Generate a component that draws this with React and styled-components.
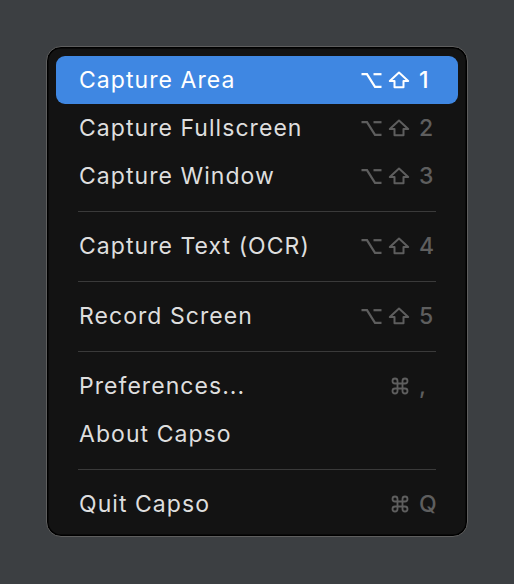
import React from 'react';
import styled, { createGlobalStyle } from 'styled-components';
import { Command } from 'lucide-react';

const GlobalStyle = createGlobalStyle`
    html, body {
        margin: 0;
        padding: 0;
        background: #3c3f42;
    }
    body {
        font-family: Inter, "Noto Sans", sans-serif;
        -webkit-font-smoothing: antialiased;
    }
`

const Page = styled.div`
    width: 514px;
    height: 584px;
    box-sizing: border-box;
    padding: 46px 46px 47px;
    display: flex;
    align-items: flex-start;
`

const Menu = styled.div`
    width: 422px;
    box-sizing: border-box;
    padding: 9px 9px 8px;
    background: #131313;
    border: 1px solid #5e5e5e;
    border-radius: 15px;
    box-shadow: inset 0 0 0 1.5px #000;
    display: flex;
    flex-direction: column;
`

const Row = styled.div`
    height: 48px;
    display: flex;
    align-items: center;
    justify-content: space-between;
    padding: 0 21px 0 23px;
    border-radius: 9px;
    background: ${p => (p.active ? '#3f87e2' : 'transparent')};
    color: ${p => (p.active ? '#ffffff' : '#dedede')};
`

const Label = styled.span`
    font-size: 23px;
    font-weight: 400;
    letter-spacing: 1.05px;
`

const Shortcut = styled.span`
    display: flex;
    align-items: center;
    color: ${p => (p.active ? '#ffffff' : '#5e5e5e')};
`

const Mods = styled.span`
    display: flex;
    align-items: center;
    gap: 6px;
`

const Key = styled.span`
    width: 18px;
    margin-left: 9px;
    font-size: 23px;
    font-weight: 500;
    text-align: left;
`

const Separator = styled.div`
    height: 1px;
    margin: 11px 22px 10px;
    background: #3a3a3a;
`

function OptionIcon() {
    return (
        <svg width="21" height="17" viewBox="0 0 21 17" fill="none" stroke="currentColor" strokeWidth="2.2" strokeLinejoin="miter">
            <path d="M0.5 2.2 H6 L14 14.8 H20.5" />
            <path d="M12.5 2.2 H20.5" />
        </svg>
    )
}

function ShiftIcon() {
    return (
        <svg width="22" height="18" viewBox="0 0 22 18" fill="none" stroke="currentColor" strokeWidth="2" strokeLinejoin="round">
            <path d="M11 1.5 L1.8 10 H6.5 V16.3 H15.5 V10 H20.2 Z" />
        </svg>
    )
}

function Shortcut_({ mods, k, active }) {
    return (
        <Shortcut active={active}>
            <Mods>
                {mods.includes('opt') && <OptionIcon />}
                {mods.includes('shift') && <ShiftIcon />}
                {mods.includes('cmd') && <Command size={20} strokeWidth={2.2} />}
            </Mods>
            <Key>{k}</Key>
        </Shortcut>
    )
}

const groups = [
    [
        { label: 'Capture Area', mods: ['opt', 'shift'], k: '1', active: true },
        { label: 'Capture Fullscreen', mods: ['opt', 'shift'], k: '2' },
        { label: 'Capture Window', mods: ['opt', 'shift'], k: '3' },
    ],
    [
        { label: 'Capture Text (OCR)', mods: ['opt', 'shift'], k: '4' },
    ],
    [
        { label: 'Record Screen', mods: ['opt', 'shift'], k: '5' },
    ],
    [
        { label: 'Preferences...', mods: ['cmd'], k: ',' },
        { label: 'About Capso' },
    ],
    [
        { label: 'Quit Capso', mods: ['cmd'], k: 'Q' },
    ],
]

export default function App() {
    return (
        <Page>
            <GlobalStyle />
            <Menu>
                {groups.map((items, gi) => (
                    <React.Fragment key={gi}>
                        {gi > 0 && <Separator />}
                        {items.map(item => (
                            <Row key={item.label} active={item.active}>
                                <Label>{item.label}</Label>
                                {item.mods && <Shortcut_ mods={item.mods} k={item.k} active={item.active} />}
                            </Row>
                        ))}
                    </React.Fragment>
                ))}
            </Menu>
        </Page>
    )
}
